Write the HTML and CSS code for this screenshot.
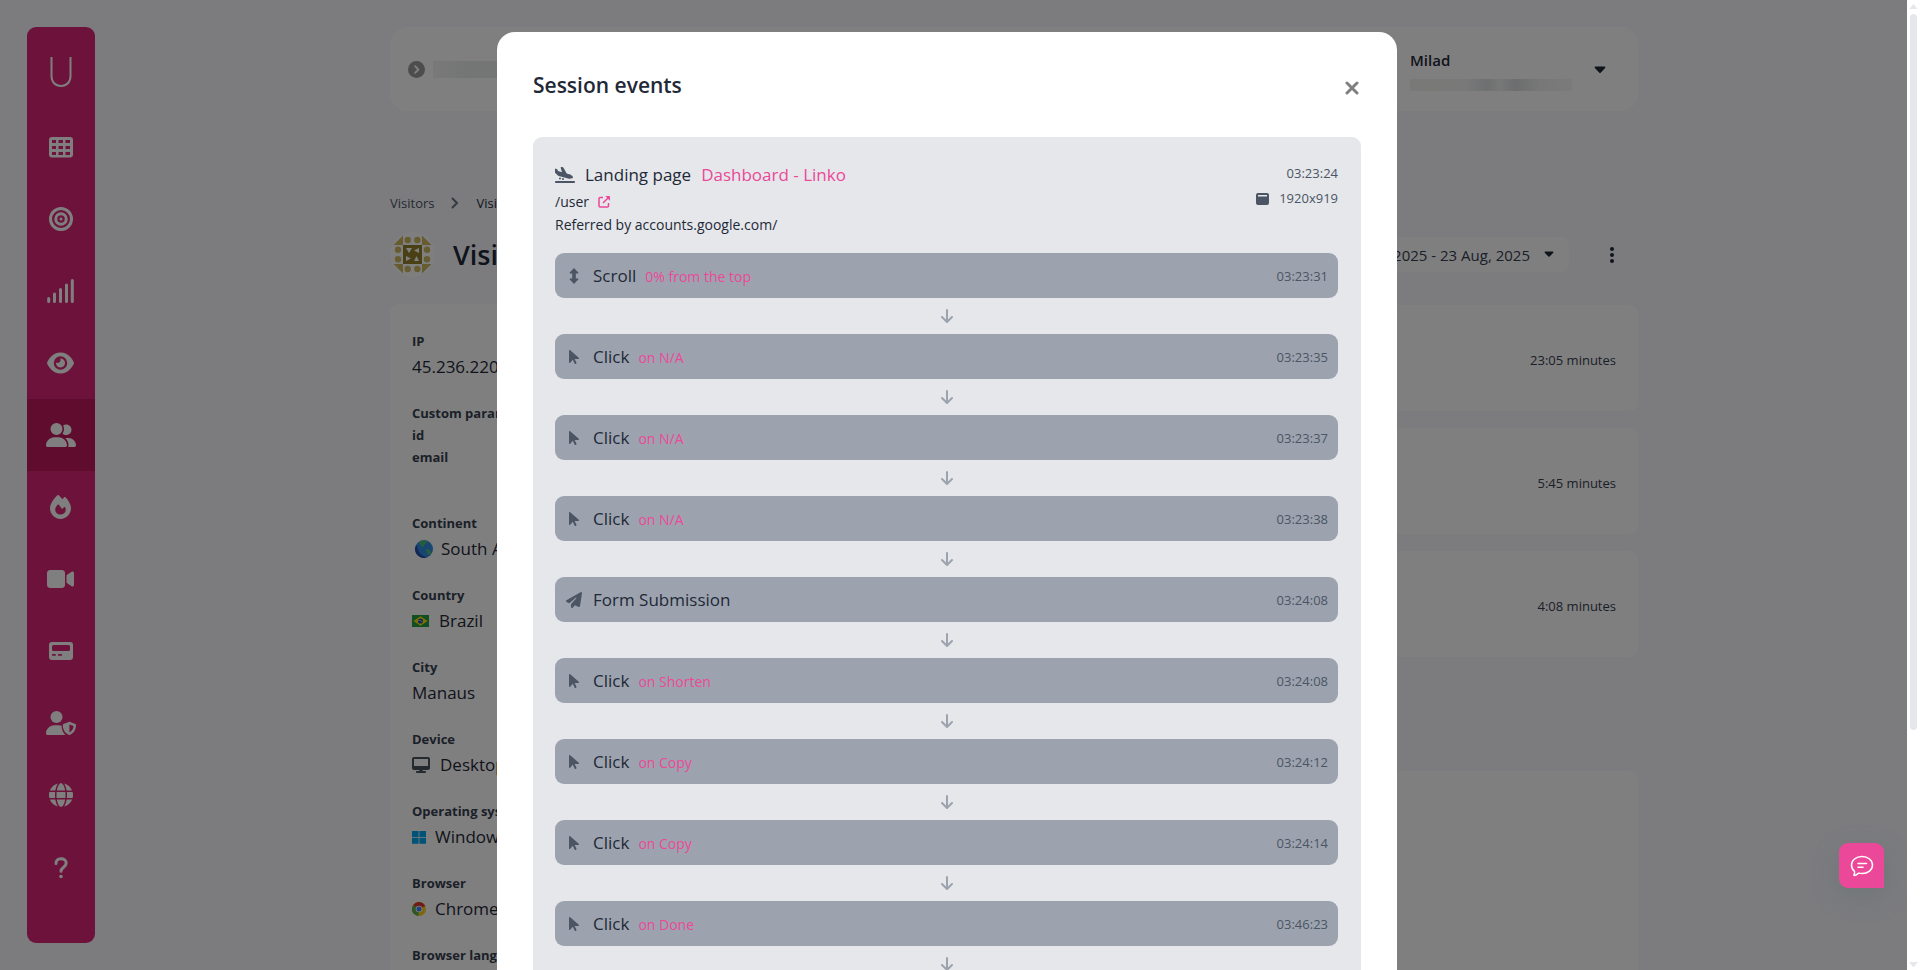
FILE: index.html
```html
<!DOCTYPE html>
<html lang="en">
<head>
    <meta charset="UTF-8">
    <meta name="viewport" content="width=device-width, initial-scale=1.0">
    <title>Visitor - Session events</title>
    <link rel="stylesheet" href="styles.css">
</head>
<body>
    <!-- shared icons -->
    <svg class="sprite" aria-hidden="true">
        <symbol id="i-pointer" viewBox="0 0 320 512"><path d="M0 55.2V426c0 12.2 9.9 22 22 22c6.3 0 12.4-2.7 16.6-7.5L121.2 346l58.1 116.3c7.9 15.8 27.1 22.2 42.9 14.3s22.2-27.1 14.3-42.9L179.8 320H297.9c12.2 0 22.1-9.9 22.1-22.1c0-6.3-2.7-12.3-7.4-16.5L38.6 37.9C34.3 34.1 28.9 32 23.2 32C10.4 32 0 42.4 0 55.2z"/></symbol>
        <symbol id="i-down" viewBox="0 0 12 14"><path d="M6 1v11.500M1 8l5 5 5-5" fill="none" stroke="currentColor" stroke-width="2" stroke-linecap="round" stroke-linejoin="round"/></symbol>
        <symbol id="i-caret" viewBox="0 0 12 8"><path d="M1.500.5h9c.8 0 1.200 1 .6 1.600L6.700 6.700c-.4.4-1 .4-1.400 0L.9 2.100C.3 1.500.7.5 1.500.5z"/></symbol>
    </svg>

    <div class="app">
        <nav class="sidebar">
            <a class="logo" href="#" aria-label="Home">
                <svg viewBox="0 0 22 30"><path d="M1.500 0v19c0 6 3.800 10 9.500 10s9.500-4 9.500-10V0" fill="none" stroke="currentColor" stroke-width="2"/></svg>
            </a>
            <a href="#" aria-label="Dashboard">
                <svg viewBox="0 0 24 24"><path fill-rule="evenodd" d="M3 2h18a3 3 0 0 1 3 3v14.500a3 3 0 0 1-3 3H3a3 3 0 0 1-3-3V5a3 3 0 0 1 3-3zM3 5v3h4V5zm6.500 0v3h4.500V5zm7 0v3H21V5zM3 11v3h4v-3zm6.500 0v3h4.500v-3zm7 0v3H21v-3zM3 17v3h4v-3zm6.500 0v3h4.500v-3zm7 0v3H21v-3z"/></svg>
            </a>
            <a href="#" aria-label="Goals">
                <svg viewBox="0 0 512 512"><path d="M448 256A192 192 0 1 0 64 256a192 192 0 1 0 384 0zM0 256a256 256 0 1 1 512 0A256 256 0 1 1 0 256zm256 80a80 80 0 1 0 0-160 80 80 0 1 0 0 160zm0-224a144 144 0 1 1 0 288 144 144 0 1 1 0-288zM224 256a32 32 0 1 1 64 0 32 32 0 1 1 -64 0z"/></svg>
            </a>
            <a href="#" aria-label="Statistics">
                <svg viewBox="0 0 27 24"><path d="M1.700 19.500v3M7.500 15v7.500M13.500 10.500v12M19.500 6v16.500M25.300 1.500v21" fill="none" stroke="currentColor" stroke-width="3" stroke-linecap="round"/></svg>
            </a>
            <a href="#" aria-label="Live">
                <svg viewBox="0 0 576 512"><path d="M288 32c-80.8 0-145.5 36.8-192.6 80.6C48.6 156 17.3 208 2.5 243.7c-3.3 7.9-3.3 16.7 0 24.6C17.3 304 48.6 356 95.4 399.4C142.5 443.2 207.2 480 288 480s145.5-36.8 192.6-80.6c46.8-43.5 78.1-95.4 93-131.1c3.3-7.9 3.3-16.7 0-24.6c-14.9-35.7-46.2-87.7-93-131.1C433.5 68.8 368.8 32 288 32zM144 256a144 144 0 1 1 288 0 144 144 0 1 1 -288 0zm144-64c0 35.3-28.7 64-64 64c-7.1 0-13.9-1.2-20.3-3.3c-5.5-1.8-11.9 1.6-11.700 7.400c.3 6.900 1.300 13.800 3.200 20.700c13.700 51.200 66.400 81.600 117.600 67.900s81.600-66.400 67.900-117.600c-11.100-41.500-47.800-69.400-88.600-71.100c-5.800-.2-9.200 6.100-7.400 11.700c2.100 6.400 3.300 13.200 3.300 20.300z"/></svg>
            </a>
            <a class="active" href="#" aria-label="Visitors">
                <svg viewBox="0 0 640 512"><path d="M96 128a128 128 0 1 1 256 0A128 128 0 1 1 96 128zM0 482.300C0 383.800 79.800 304 178.300 304h91.400C368.200 304 448 383.800 448 482.300c0 16.400-13.300 29.700-29.700 29.700H29.700C13.300 512 0 498.700 0 482.300zM609.300 512H471.400c5.400-9.400 8.600-20.300 8.600-32v-8c0-60.700-27.100-115.200-69.800-151.800c2.400-.1 4.700-.2 7.100-.2h61.400C567.800 320 640 392.200 640 481.300c0 17-13.800 30.700-30.700 30.700zM432 256c-31 0-59-12.600-79.300-32.900C372.400 196.500 384 163.600 384 128c0-26.800-6.600-52.100-18.300-74.300C384.300 40.100 407.200 32 432 32c61.900 0 112 50.100 112 112s-50.100 112-112 112z"/></svg>
            </a>
            <a href="#" aria-label="Heatmaps">
                <svg viewBox="0 0 448 512"><path d="M159.300 5.400c7.800-7.300 19.900-7.200 27.700 .1c27.600 25.900 53.500 53.800 77.700 84c11-14.400 23.500-30.100 37-42.900c7.900-7.400 20.100-7.400 28 .1c34.600 33 63.900 76.600 84.500 118c20.300 40.800 33.800 82.500 33.800 111.900C448 404.200 348.200 512 224 512C98.400 512 0 404.100 0 276.500c0-38.400 17.800-85.300 45.400-131.700C73.300 97.700 112.700 48.600 159.300 5.400zM225.700 416c25.300 0 47.700-7 68.800-21c42.100-29.400 53.400-88.200 28.100-134.400c-4.500-9-16-9.600-22.500-2l-25.200 29.300c-6.600 7.600-18.500 7.400-24.700-.5c-16.500-21-46-58.500-62.800-79.800c-6.300-8-18.300-8.100-24.700-.1c-33.800 42.500-50.800 69.300-50.800 99.400C112 375.400 162.600 416 225.700 416z"/></svg>
            </a>
            <a href="#" aria-label="Replays">
                <svg viewBox="0 0 576 512"><path d="M0 128C0 92.700 28.700 64 64 64H320c35.300 0 64 28.700 64 64V384c0 35.300-28.700 64-64 64H64c-35.300 0-64-28.700-64-64V128zM559.100 99.800c10.400 5.600 16.900 16.400 16.900 28.200V384c0 11.800-6.500 22.600-16.900 28.200s-23 5-32.900-1.600l-96-64L416 337.100V320 192 174.900l14.200-9.500 96-64c9.800-6.500 22.400-7.200 32.900-1.600z"/></svg>
            </a>
            <a href="#" aria-label="Notifications">
                <svg viewBox="0 0 24 24"><path fill-rule="evenodd" d="M3 3h18a3 3 0 0 1 3 3v12a3 3 0 0 1-3 3H3a3 3 0 0 1-3-3V6a3 3 0 0 1 3-3zm1.500 3A1.500 1.500 0 0 0 3 7.500v3A1.500 1.500 0 0 0 4.500 12h15a1.500 1.500 0 0 0 1.500-1.500v-3A1.500 1.500 0 0 0 19.500 6zM3.800 15a.8.8 0 0 0 0 1.800H6A.8.8 0 0 0 6 15zm6 0a.8.8 0 0 0 0 1.800h2.400a.8.8 0 0 0 0-1.800z"/></svg>
            </a>
            <a href="#" aria-label="Privacy">
                <svg viewBox="0 0 30 24"><circle cx="10.500" cy="6" r="6"/><path d="M0 22.600C0 18 3.700 14.300 8.300 14.300h4.400c1.100 0 2 .2 2.900.5.1 3.600 1.200 6.900 3.700 9.200H1.400C.6 24 0 23.400 0 22.600z"/><path fill-rule="evenodd" d="M23.400 10.700l6 2.400c.4.200.6.5.6.9 0 3.600-1.500 8-6.200 9.900-.3.100-.5.100-.8 0-4.700-1.900-6.200-6.300-6.200-9.900 0-.4.200-.7.600-.9zm0 2.700v8.100c2.700-1.300 4-3.700 4.200-6.400z"/></svg>
            </a>
            <a href="#" aria-label="Websites">
                <svg viewBox="0 0 512 512"><path d="M352 256c0 22.200-1.200 43.600-3.300 64H163.300c-2.200-20.400-3.300-41.800-3.300-64s1.200-43.600 3.300-64H348.700c2.200 20.400 3.300 41.800 3.300 64zm28.800-64H503.900c5.300 20.500 8.100 41.900 8.100 64s-2.800 43.500-8.100 64H380.800c2.100-20.600 3.200-42 3.200-64s-1.100-43.400-3.200-64zm112.600-32H376.700c-10-63.900-29.800-117.400-55.300-151.600c78.300 20.700 142 77.500 171.900 151.600zm-149.100 0H167.700c6.100-36.400 15.500-68.600 27-94.700c10.500-23.600 22.200-40.700 33.500-51.500C239.400 3.200 248.700 0 256 0s16.600 3.200 27.800 13.800c11.300 10.800 23 27.900 33.500 51.500c11.600 26 20.900 58.200 27 94.700zm-209 0H18.600C48.600 85.900 112.200 29.100 190.600 8.400C165.100 42.600 145.300 96.100 135.300 160zM8.100 192H131.200c-2.100 20.600-3.200 42-3.200 64s1.100 43.400 3.200 64H8.100C2.800 299.500 0 278.100 0 256s2.800-43.500 8.100-64zM194.700 446.600c-11.600-26-20.900-58.200-27-94.600H344.300c-6.100 36.400-15.500 68.600-27 94.600c-10.500 23.600-22.200 40.700-33.500 51.500C272.600 508.800 263.300 512 256 512s-16.600-3.200-27.800-13.800c-11.300-10.800-23-27.900-33.500-51.500zM135.300 352c10 63.900 29.800 117.400 55.300 151.600C112.200 482.900 48.600 426.100 18.600 352H135.300zm358.100 0c-30 74.100-93.600 130.900-171.900 151.600c25.500-34.200 45.200-87.700 55.300-151.600H493.400z"/></svg>
            </a>
            <a href="#" aria-label="Help">
                <svg viewBox="0 0 16 24"><path d="M3 8.500C3 5.500 4.500 3.800 8 3.800c3 0 5.200 1.600 5.200 4.300 0 4.200-5.200 4-5.200 8.200" fill="none" stroke="currentColor" stroke-width="3" stroke-linecap="round" stroke-linejoin="round"/><circle cx="8" cy="21.500" r="1.800"/></svg>
            </a>
        </nav>

        <main class="main">
            <div class="container">
                <header class="topbar card">
                    <div class="site">
                        <svg class="site-icon" viewBox="0 0 18 18"><circle cx="9" cy="9" r="9"/><path d="M7.500 5.500L11 9l-3.500 3.500" fill="none" stroke="#fff" stroke-width="2" stroke-linecap="round" stroke-linejoin="round"/></svg>
                        <span class="masked masked-site"></span>
                    </div>
                    <div class="user">
                        <div class="user-info">
                            <strong>Milad</strong>
                            <span class="masked masked-mail"></span>
                        </div>
                        <svg class="caret" viewBox="0 0 12 8"><use href="#i-caret"/></svg>
                    </div>
                </header>

                <div class="breadcrumb">
                    <a href="#">Visitors</a>
                    <svg viewBox="0 0 8 12"><path d="M1.500 1.500L6 6l-4.500 4.500" fill="none" stroke="currentColor" stroke-width="2" stroke-linecap="round"/></svg>
                    <span>Visitor</span>
                </div>

                <div class="heading">
                    <svg class="avatar" viewBox="0 0 45 45">
                        <circle cx="22.500" cy="22.500" r="22.500" fill="#fff"/>
                        <g fill="#cdb95f">
                            <path d="M13 3.500V13H3.500zM32 3.500V13h9.500zM13 41.500V32H3.500zM32 41.500V32h9.500z"/>
                            <circle cx="17.700" cy="8" r="3.200"/><circle cx="27.300" cy="8" r="3.200"/>
                            <circle cx="17.700" cy="37" r="3.200"/><circle cx="27.300" cy="37" r="3.200"/>
                            <circle cx="8" cy="17.700" r="3.200"/><circle cx="8" cy="27.300" r="3.200"/>
                            <circle cx="37" cy="17.700" r="3.200"/><circle cx="37" cy="27.300" r="3.200"/>
                        </g>
                        <path d="M13 13h19v19H13z" fill="#95802a"/>
                        <path d="M16 16h6l-3 5zM29 16v5l-5-2.500zM16 24l5 2.500-5 2.500zM26.500 24l2.500 5h-5z" fill="#fff"/>
                    </svg>
                    <h1>Visitor</h1>
                    <button class="date-range" type="button">24 Jul, 2025 - 23 Aug, 2025
                        <svg class="caret" viewBox="0 0 12 8"><use href="#i-caret"/></svg>
                    </button>
                    <button class="more" type="button" aria-label="More">
                        <svg viewBox="0 0 4 16"><circle cx="2" cy="2" r="2"/><circle cx="2" cy="8" r="2"/><circle cx="2" cy="14" r="2"/></svg>
                    </button>
                </div>

                <div class="columns">
                    <section class="details card">
                        <div class="detail"><h4>IP</h4><p>45.236.220.10</p></div>
                        <div class="detail params"><h4>Custom parameters</h4><h4>id</h4><h4>email</h4></div>
                        <div class="detail">
                            <h4>Continent</h4>
                            <p><svg class="globe" viewBox="0 0 18 18"><circle cx="9" cy="9" r="9" fill="#2f8fe0"/><path d="M4 2.500c2-2 6-2.500 8.500-1.500l-1 2.500-2.500 1 .5 1.500-2 1-2.500-2.500zM11 9l3 .5 2.500 2.500c-1 2-2 3-3 3.500l-1.500-3z" fill="#4fb87a"/><path d="M0 9a9 9 0 0 0 12 8.500C7 16 3 13 2 5 .8 6 0 7.500 0 9z" fill="#2a4fa8"/></svg>South America</p>
                        </div>
                        <div class="detail">
                            <h4>Country</h4>
                            <p><svg class="flag" viewBox="0 0 17 12"><path d="M0 0h17v12H0z" fill="#229e45"/><path d="M8.500 1.300L15.500 6l-7 4.700L1.500 6z" fill="#f8e509"/><circle cx="8.500" cy="6" r="2.600" fill="#2b49a3"/><path d="M6.200 5.200q2.500 0 4.500 1.800" fill="none" stroke="#fff" stroke-width=".6"/></svg>Brazil</p>
                        </div>
                        <div class="detail"><h4>City</h4><p>Manaus</p></div>
                        <div class="detail">
                            <h4>Device</h4>
                            <p><svg class="desktop" viewBox="0 0 576 512"><path fill="#4b5563" fill-rule="evenodd" d="M64 0C28.700 0 0 28.700 0 64V352c0 35.300 28.700 64 64 64H240l-10.700 32H160c-17.700 0-32 14.300-32 32s14.300 32 32 32H416c17.700 0 32-14.300 32-32s-14.300-32-32-32H346.700L336 416H512c35.300 0 64-28.700 64-64V64c0-35.300-28.700-64-64-64H64zM512 64V288H64V64H512z"/></svg>Desktop</p>
                        </div>
                        <div class="detail">
                            <h4>Operating system</h4>
                            <p><svg class="small-logo" viewBox="0 0 14 14"><path d="M0 1h6.600v6H0zM7.400 1H14v6H7.400zM0 7.700h6.600v6H0zM7.400 7.700H14v6H7.400z" fill="#00a4ef"/></svg>Windows 10</p>
                        </div>
                        <div class="detail">
                            <h4>Browser</h4>
                            <p><svg class="small-logo" viewBox="0 0 14 14"><circle cx="7" cy="7" r="7" fill="#fdd017"/><path d="M7 7L1 3.300A7 7 0 0 1 13.300 4z" fill="#e33b2e"/><path d="M7 7L1 3.300A7 7 0 0 0 6.500 14z" fill="#5bb04d"/><circle cx="7" cy="7" r="3.300" fill="#fff"/><circle cx="7" cy="7" r="2.500" fill="#4285f4"/></svg>Chrome 139</p>
                        </div>
                        <div class="detail"><h4>Browser language</h4></div>
                    </section>

                    <div class="sessions">
                        <div class="session card">23:05 minutes</div>
                        <div class="session card">5:45 minutes</div>
                        <div class="session card">4:08 minutes</div>
                        <div class="activity card"></div>
                    </div>
                </div>
            </div>
        </main>
        <div class="overlay"></div>

        <div class="modal" role="dialog" aria-labelledby="modalTitle">
            <div class="modal-header">
                <h2 id="modalTitle">Session events</h2>
                <button class="close" type="button" aria-label="Close">
                    <svg viewBox="0 0 14 14"><path d="M2 2l10 10M12 2L2 12" fill="none" stroke="currentColor" stroke-width="3" stroke-linecap="round"/></svg>
                </button>
            </div>
            <div class="panel">
                <div class="landing">
                    <div class="landing-info">
                        <div class="landing-title">
                            <svg class="plane" viewBox="0 0 640 512"><path d="M.3 166.900L0 68C0 57.700 9.500 50.100 19.500 52.300l35.600 7.900c10.600 2.300 19.200 9.900 23 20L96 128l127.300 37.600L181.800 20.400C178.900 10.200 186.600 0 197.200 0h40.100c11.600 0 22.200 6.200 27.900 16.300l109 193.800 107.200 31.700c15.900 4.700 30.800 12.500 43.700 22.800l34.400 27.600c24 19.200 18.100 57.300-10.700 68.200c-41.200 15.600-86.200 18.100-128.800 7L121.700 289.800c-11-2.900-21.200-8.700-29.300-16.700L9.500 189.400c-5.900-6-9.300-14.100-9.300-22.500zM32 448H608c17.700 0 32 14.300 32 32s-14.300 32-32 32H32c-17.700 0-32-14.300-32-32s14.300-32 32-32zm96-80a32 32 0 1 1 64 0 32 32 0 1 1 -64 0zm128-16a32 32 0 1 1 0 64 32 32 0 1 1 0-64z"/></svg>
                            <span>Landing page</span>
                            <a href="#">Dashboard - Linko</a>
                        </div>
                        <div class="landing-line">
                            <span>/user</span>
                            <a href="#" aria-label="Open page"><svg class="external" viewBox="0 0 12 12"><path d="M5 1.500H2c-.7 0-1 .4-1 1V10c0 .7.4 1 1 1h7.500c.7 0 1-.4 1-1V7M5 7l5-5" fill="none" stroke="currentColor" stroke-width="1.500"/><path d="M7.300 0H11.500c.3 0 .5.200.5.500v4.200z"/></svg></a>
                        </div>
                        <div class="landing-line">Referred by accounts.google.com/</div>
                    </div>
                    <div class="landing-meta">
                        <div>03:23:24</div>
                        <div>
                            <svg class="window" viewBox="0 0 13 12"><path fill-rule="evenodd" d="M2 0h9a2 2 0 0 1 2 2v8a2 2 0 0 1-2 2H2a2 2 0 0 1-2-2V2a2 2 0 0 1 2-2zm0 2v1.500h9V2z"/></svg>
                            <span>1920x919</span>
                        </div>
                    </div>
                </div>

                <div class="event">
                    <svg class="event-icon" viewBox="0 0 16 16"><path d="M8 0l4.200 4.400c.4.500.1 1-.5 1H9.800v5.200h1.900c.6 0 .9.500.5 1L8 16l-4.200-4.400c-.4-.5-.1-1 .5-1h1.900V5.400H4.300c-.6 0-.9-.5-.5-1z"/></svg>
                    <span class="event-name">Scroll</span>
                    <span class="event-target">0% from the top</span>
                    <time>03:23:31</time>
                </div>
                <svg class="arrow" viewBox="0 0 12 14"><use href="#i-down"/></svg>
                <div class="event">
                    <svg class="event-icon" viewBox="0 0 320 512"><use href="#i-pointer"/></svg>
                    <span class="event-name">Click</span>
                    <span class="event-target">on N/A</span>
                    <time>03:23:35</time>
                </div>
                <svg class="arrow" viewBox="0 0 12 14"><use href="#i-down"/></svg>
                <div class="event">
                    <svg class="event-icon" viewBox="0 0 320 512"><use href="#i-pointer"/></svg>
                    <span class="event-name">Click</span>
                    <span class="event-target">on N/A</span>
                    <time>03:23:37</time>
                </div>
                <svg class="arrow" viewBox="0 0 12 14"><use href="#i-down"/></svg>
                <div class="event">
                    <svg class="event-icon" viewBox="0 0 320 512"><use href="#i-pointer"/></svg>
                    <span class="event-name">Click</span>
                    <span class="event-target">on N/A</span>
                    <time>03:23:38</time>
                </div>
                <svg class="arrow" viewBox="0 0 12 14"><use href="#i-down"/></svg>
                <div class="event">
                    <svg class="event-icon" viewBox="0 0 512 512"><path d="M498.100 5.600c10.100 7 15.400 19.100 13.500 31.200l-64 416c-1.500 9.700-7.400 18.200-16 23s-18.900 5.400-28 1.600L284 427.700l-68.500 74.100c-8.900 9.700-22.900 12.900-35.200 8.100S160 493.200 160 480V396.400c0-4 1.500-7.800 4.200-10.700L331.800 202.800c5.800-6.300 5.600-16-.4-22s-15.700-6.400-22-.7L106 360.800 17.700 316.600C7.100 311.300 .3 300.700 0 288.900s5.900-22.800 16.100-28.700l448-256c10.700-6.100 23.900-5.500 34 1.400z"/></svg>
                    <span class="event-name">Form Submission</span>
                    <time>03:24:08</time>
                </div>
                <svg class="arrow" viewBox="0 0 12 14"><use href="#i-down"/></svg>
                <div class="event">
                    <svg class="event-icon" viewBox="0 0 320 512"><use href="#i-pointer"/></svg>
                    <span class="event-name">Click</span>
                    <span class="event-target">on Shorten</span>
                    <time>03:24:08</time>
                </div>
                <svg class="arrow" viewBox="0 0 12 14"><use href="#i-down"/></svg>
                <div class="event">
                    <svg class="event-icon" viewBox="0 0 320 512"><use href="#i-pointer"/></svg>
                    <span class="event-name">Click</span>
                    <span class="event-target">on Copy</span>
                    <time>03:24:12</time>
                </div>
                <svg class="arrow" viewBox="0 0 12 14"><use href="#i-down"/></svg>
                <div class="event">
                    <svg class="event-icon" viewBox="0 0 320 512"><use href="#i-pointer"/></svg>
                    <span class="event-name">Click</span>
                    <span class="event-target">on Copy</span>
                    <time>03:24:14</time>
                </div>
                <svg class="arrow" viewBox="0 0 12 14"><use href="#i-down"/></svg>
                <div class="event">
                    <svg class="event-icon" viewBox="0 0 320 512"><use href="#i-pointer"/></svg>
                    <span class="event-name">Click</span>
                    <span class="event-target">on Done</span>
                    <time>03:46:23</time>
                </div>
                <svg class="arrow" viewBox="0 0 12 14"><use href="#i-down"/></svg>
            </div>
        </div>

        <button class="chat" type="button" aria-label="Chat">
            <svg viewBox="0 0 24 22"><path d="M12 1.500c6 0 10.500 3.700 10.500 8.600S18 18.500 12 18.500c-1.200 0-2.300-.1-3.300-.4C7.500 19 6 20.500 4.500 20.500c-.6 0-.6-.4-.4-.9.500-1 .6-2.300.4-3.300-1.900-1.500-3-3.700-3-6.200C1.500 5.200 6 1.500 12 1.500z" fill="none" stroke="currentColor" stroke-width="1.500" stroke-linejoin="round"/><path d="M8 8.500h8.500M8 12.200h5" fill="none" stroke="currentColor" stroke-width="1.500" stroke-linecap="round"/></svg>
        </button>
    </div>

    <div class="scrollbar">
        <svg viewBox="0 0 10 6"><path d="M5 0l5 6H0z"/></svg>
        <div class="track"><div class="thumb"></div></div>
        <svg viewBox="0 0 10 6"><path d="M0 0h10L5 6z"/></svg>
    </div>
</body>
</html>
```
FILE: styles.css
```css
* {
    box-sizing: border-box;
}
body {
    margin: 0;
    height: 100vh;
    display: flex;
    overflow: hidden;
    font-family: "Open Sans", "Noto Sans", sans-serif;
    font-size: 13px;
    line-height: 22px;
    color: #1f2937;
    background: #f8f9ff;
}
h1, h2, h4, p {
    margin: 0;
}
a {
    color: inherit;
    text-decoration: none;
}
button {
    font: inherit;
    color: inherit;
    padding: 0;
    border: none;
    background: none;
    cursor: pointer;
}
svg {
    display: block;
    flex: none;
    fill: currentColor;
}
.sprite {
    position: absolute;
    width: 0;
    height: 0;
}
.app {
    position: relative;
    flex: 1;
    display: flex;
    align-items: flex-start;
    gap: 26px;
    padding: 27px 0 27px 27px;
    height: 100vh;
    overflow: hidden;
}
.card {
    background: #fff;
    border-radius: 9px;
}

/* sidebar */
.sidebar {
    width: 68px;
    height: 100%;
    flex: none;
    display: flex;
    flex-direction: column;
    background: #db2777;
    border-radius: 9px;
    color: #fff;
}
.sidebar a {
    height: 72px;
    padding-right: 1px;
    display: flex;
    align-items: center;
    justify-content: center;
}
.sidebar svg {
    height: 24px;
}
.sidebar .logo {
    height: 84px;
    padding-top: 6px;
}
.sidebar .logo svg {
    height: 30px;
}
.sidebar .active {
    background: #be185d;
}

/* page behind the modal */
.main {
    flex: 1;
}
.container {
    max-width: 1248px;
    margin: 0 auto;
}
.topbar {
    height: 84px;
    padding: 1px 32px 0 18px;
    border-radius: 18px;
    display: flex;
    align-items: center;
    justify-content: space-between;
}
.site, .user {
    display: flex;
    align-items: center;
}
.site {
    gap: 8px;
}
.site-icon {
    width: 17px;
    color: #9a9a9a;
}
.masked {
    display: block;
}
.masked-site {
    width: 160px;
    height: 17px;
    background: linear-gradient(90deg, #f3f3f3, #e9ebeb 20%, #ececec);
}
.user {
    gap: 22px;
}
.user-info strong {
    display: block;
    font-size: 15px;
    font-weight: 600;
    padding-bottom: 8px;
}
.masked-mail {
    width: 162px;
    height: 12px;
    background: linear-gradient(90deg, #f2f2f0, #f2f2f2 35%, #dcdfe2 48%, #f0f0f0 55%, #dadcdf 65%, #f0f0f0 80%, #f6f6f6);
}
.caret {
    width: 12px;
}
.breadcrumb {
    display: flex;
    align-items: center;
    gap: 17px;
    padding-top: 81px;
}
.breadcrumb a {
    color: #4b5563;
}
.breadcrumb svg {
    width: 8px;
    color: #6b7280;
}
.heading {
    display: flex;
    align-items: center;
    margin-top: 18px;
}
.avatar {
    width: 45px;
    margin-right: 18px;
}
.heading h1 {
    flex: 1;
    font-size: 27px;
    font-weight: 600;
    line-height: 36px;
}
.date-range {
    display: flex;
    align-items: center;
    gap: 14px;
    height: 35px;
    padding: 0 15px 0 14px;
    background: #fff;
    border-radius: 9px;
    font-size: 15px;
    color: #374151;
}
.date-range .caret {
    width: 10px;
    color: #1f2937;
}
.more {
    width: 16px;
    margin: 0 18px 0 35px;
}
.more svg {
    height: 16px;
    margin: 0 auto;
}
.columns {
    display: grid;
    grid-template-columns: 1fr 2fr;
    gap: 18px;
    margin-top: 27px;
}
.details {
    padding: 26px 22px;
}
.detail {
    margin-bottom: 20px;
}
.detail.params {
    margin-bottom: 44px;
}
.detail h4 {
    font-size: 13px;
    font-weight: 700;
    color: #374151;
}
.detail p {
    display: flex;
    align-items: center;
    font-size: 17px;
    line-height: 30px;
    white-space: nowrap;
}
.globe {
    width: 18px;
    margin: 0 8px 0 3px;
}
.flag {
    width: 17px;
    margin-right: 10px;
}
.desktop {
    width: 18px;
    margin-right: 10px;
}
.small-logo {
    width: 14px;
    margin-right: 9px;
}
.sessions {
    display: flex;
    flex-direction: column;
    gap: 17px;
    padding-top: 1px;
}
.session {
    height: 106px;
    padding: 3px 22px 0;
    display: flex;
    align-items: center;
    justify-content: flex-end;
    color: #374151;
}
.activity {
    flex: 1;
    margin-top: 97px;
}

/* modal */
.overlay {
    position: absolute;
    inset: 0;
    background: rgba(0, 0, 0, 0.5);
}
.modal {
    position: absolute;
    top: 32px;
    left: 0;
    right: 13px;
    width: 900px;
    margin: 0 auto;
    padding: 36px;
    background: #fff;
    border-radius: 18px;
}
.modal-header {
    display: flex;
    align-items: center;
    justify-content: space-between;
    height: 33px;
    margin-bottom: 36px;
}
.modal-header h2 {
    font-size: 21px;
    font-weight: 600;
}
.close {
    padding: 6px 2px 0;
    color: #808080;
}
.close svg {
    width: 14px;
}
.panel {
    padding: 22px 23px 22px 22px;
    background: #e5e7eb;
    border-radius: 9px;
}
.landing {
    display: flex;
    justify-content: space-between;
    height: 94px;
}
.landing-title {
    display: flex;
    align-items: center;
    gap: 10px;
    font-size: 17px;
    line-height: 31px;
}
.landing a {
    color: #ec4899;
}
.plane {
    width: 20px;
    color: #4b5563;
}
.landing-line {
    display: flex;
    gap: 9px;
    font-size: 14px;
    line-height: 23px;
    align-items: center;
}
.external {
    width: 12px;
}
.landing-meta {
    padding-top: 2px;
    color: #4b5563;
}
.landing-meta div {
    display: flex;
    align-items: center;
    justify-content: flex-end;
    gap: 10px;
    line-height: 25px;
}
.window {
    width: 13px;
}
.event {
    display: flex;
    align-items: center;
    height: 45px;
    padding: 0 10px 0 11px;
    background: #9ca3af;
    border-radius: 9px;
}
.event-icon {
    width: 16px;
    height: 16px;
    color: #4b5563;
}
.event-name {
    font-size: 17px;
    margin: 0 9px 0 11px;
}
.event-target {
    font-size: 14px;
    padding-top: 2px;
    color: #ec4899;
}
.event time {
    margin-left: auto;
    color: #4b5563;
}
.arrow {
    width: 12px;
    margin: 11px auto;
    color: #9ca3af;
}

/* chat bubble */
.chat {
    position: absolute;
    right: 23px;
    bottom: 82px;
    width: 45px;
    height: 45px;
    display: flex;
    align-items: center;
    justify-content: center;
    background: #ec4899;
    border-radius: 9px 9px 0 9px;
    color: #fff;
    box-shadow: 0 8px 24px rgba(90, 110, 110, 0.4);
}
.chat svg {
    width: 24px;
}

.scrollbar {
    width: 13px;
    padding: 4px 0 3px;
    display: flex;
    flex-direction: column;
    align-items: center;
    gap: 5px;
    background: #fff;
    color: #e5e7eb;
}
.scrollbar svg {
    width: 9px;
}
.track {
    flex: 1;
    width: 7px;
}
.thumb {
    height: 76%;
    background: #e5e7eb;
    border-radius: 4px;
}
```
